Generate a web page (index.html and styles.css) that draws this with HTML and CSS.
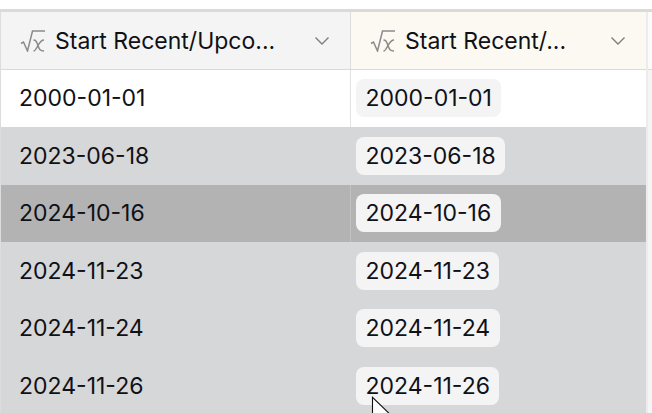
FILE: index.html
```html
<!DOCTYPE html>
<html lang="en">
<head>
<meta charset="utf-8">
<title>Table</title>
<link rel="stylesheet" href="styles.css">
</head>
<body>
<div class="frame">
  <div class="table">
    <div class="row head">
      <div class="cell c1">
        <svg class="fx" viewBox="0 0 26 22" aria-hidden="true"><path d="M1 13.500l2.500-1.500L7.500 21 12.500 1H25" fill="none" stroke="#8a8a8a" stroke-width="1.500"/><path d="M13.500 10c2.500 0 3 1.500 4.500 5.500s2 5.500 6 5.500M24 10c-3 0-4.500 3-6 5.500s-2.500 5.500-4.500 5.500" fill="none" stroke="#8a8a8a" stroke-width="1.500"/></svg>
        <span class="title">Start Recent/Upco...</span>
        <svg class="chev" viewBox="0 0 16 10" aria-hidden="true"><path d="M1.500 1.500L8 8l6.500-6.500" fill="none" stroke="#7d7d7d" stroke-width="1.400"/></svg>
      </div>
      <div class="cell c2 cream">
        <svg class="fx" viewBox="0 0 26 22" aria-hidden="true"><path d="M1 13.500l2.500-1.500L7.500 21 12.500 1H25" fill="none" stroke="#8a8a8a" stroke-width="1.500"/><path d="M13.500 10c2.500 0 3 1.500 4.500 5.500s2 5.500 6 5.500M24 10c-3 0-4.500 3-6 5.500s-2.500 5.500-4.500 5.500" fill="none" stroke="#8a8a8a" stroke-width="1.500"/></svg>
        <span class="title">Start Recent/...</span>
        <svg class="chev" viewBox="0 0 16 10" aria-hidden="true"><path d="M1.500 1.500L8 8l6.500-6.500" fill="none" stroke="#7d7d7d" stroke-width="1.400"/></svg>
      </div>
    </div>
    <div class="row first"><div class="cell c1">2000-01-01</div><div class="cell c2"><span class="chip">2000-01-01</span></div></div>
    <div class="row"><div class="cell c1">2023-06-18</div><div class="cell c2"><span class="chip">2023-06-18</span></div></div>
    <div class="row active"><div class="cell c1">2024-10-16</div><div class="cell c2"><span class="chip">2024-10-16</span></div></div>
    <div class="row"><div class="cell c1">2024-11-23</div><div class="cell c2"><span class="chip">2024-11-23</span></div></div>
    <div class="row"><div class="cell c1">2024-11-24</div><div class="cell c2"><span class="chip">2024-11-24</span></div></div>
    <div class="row"><div class="cell c1">2024-11-26</div><div class="cell c2"><span class="chip">2024-11-26</span></div></div>
  </div>
</div>
<svg class="cursor" viewBox="0 0 18 24" aria-hidden="true"><path d="M1 1v19l5-4.500 3.500 7 2.500-1.200-3.300-6.800H15z" fill="#fff" stroke="#111" stroke-width="0.800"/></svg>
</body>
</html>
```
FILE: styles.css
```css
html, body { margin: 0; padding: 0; background: #fff; height: 413px; overflow: hidden; }
body { position: relative; font-family: Inter, "Liberation Sans", sans-serif; color: #101116; }
.frame { margin-top: 9px; height: 404px; border-top: 3px solid #dadada; box-sizing: border-box; background: linear-gradient(#fbfbfb 57px, #dcdcdc 57px, #dcdcdc 58px, #f5f5f5 58px); }
.table { width: 648px; height: 401px; overflow: hidden; border-left: 1px solid #dcdddf; border-right: 2px solid #ececec; box-sizing: border-box; background: #d6d7d9; }
.row { display: grid; grid-template-columns: 349px 296px; height: 57.49px; font-size: 23px; align-items: stretch; }
.cell { display: flex; align-items: center; box-sizing: border-box; padding-left: 18px; padding-bottom: 1px; }
.c2 { padding-left: 5px; border-left: 1px solid transparent; }
.head { height: 58px; background: #f4f4f4; border-bottom: 1px solid #d9d9d9; box-sizing: border-box; }
.head .cell { padding-bottom: 0; padding-left: 19px; }
.head .c2 { padding-left: 19px; border-left: 1px solid #dddddd; }
.head .cream { background: #fcf9f2; }
.first { background: #fff; }
.first .c2 { border-left-color: #e2e2e2; }
.active { background: #b3b3b4; }
.active .c2 { border-left-color: #c2c2c3; }
.title { flex: 1; white-space: nowrap; margin-left: 9px; }
.fx { width: 26px; height: 22px; flex: none; }
.chev { width: 16px; height: 10px; flex: none; margin-right: 20px; }
.chip { background: #f4f4f4; border-radius: 8px; padding: 0 9.500px; line-height: 38px; }
.cursor { position: absolute; left: 370.500px; top: 395.500px; width: 25px; height: 33px; }
```
